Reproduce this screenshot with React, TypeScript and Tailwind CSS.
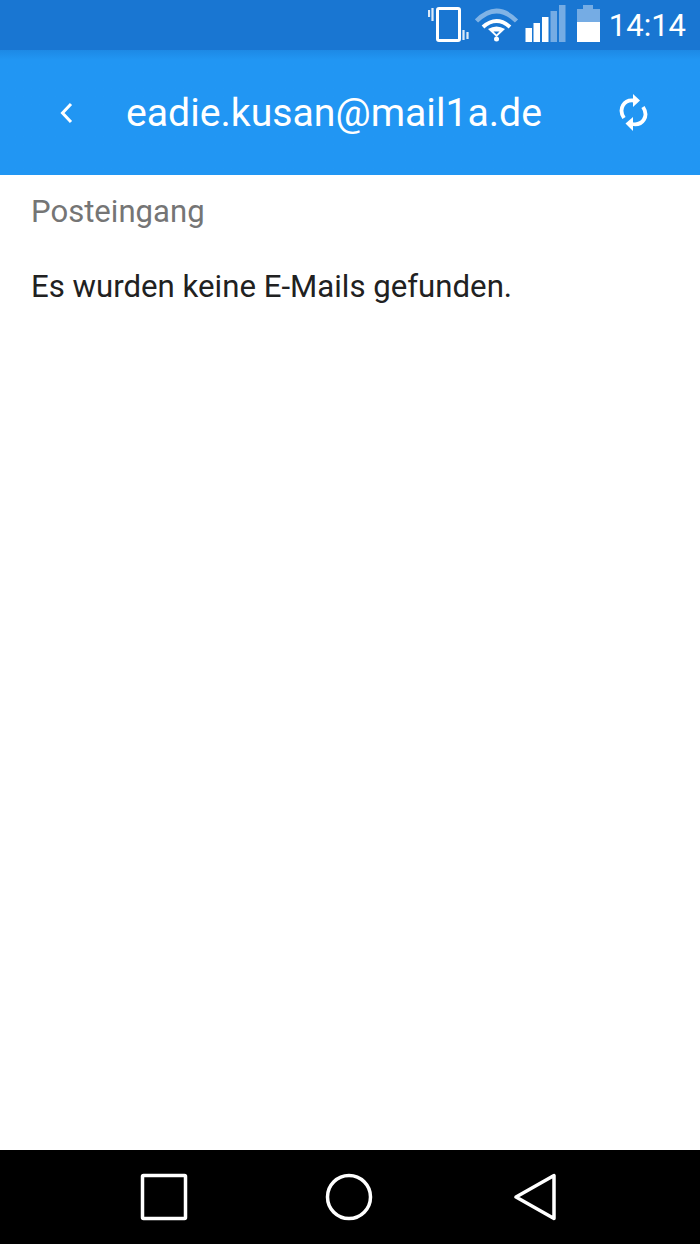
const FONT = { fontFamily: "Roboto, sans-serif" };

const VibrateIcon = () => (
  <svg width="42" height="50" viewBox="428 0 42 50" fill="none">
    <rect x="437.5" y="8.5" width="22" height="32" rx="1.5" stroke="white" strokeWidth="3" />
    <path d="M429 10v7M432.5 8v13M463.5 30v10M467.5 32v7" stroke="white" strokeOpacity="0.85" strokeWidth="2.2" />
  </svg>
);

const WifiIcon = () => (
  <svg width="44" height="50" viewBox="475 0 44 50" fill="none">
    <path d="M476.5 21 Q496.5 1 516.5 21" stroke="white" strokeOpacity="0.45" strokeWidth="4.5" />
    <path d="M483 27 Q496.5 15 510 27" stroke="white" strokeWidth="4" />
    <path d="M488 29 Q496.5 24 505 29 L496.5 37 Z" fill="white" />
    <path d="M493.5 31.5 L499.5 31.5 L496.5 34.5 Z" fill="#1976d2" />
    <circle cx="496.5" cy="39" r="2.5" fill="white" />
  </svg>
);

const SignalIcon = () => (
  <svg width="42" height="50" viewBox="525 0 42 50" fill="none">
    <rect x="525.5" y="28" width="6.5" height="14" fill="white" />
    <rect x="533.5" y="23" width="6.5" height="19" fill="white" />
    <rect x="542" y="17" width="6.5" height="25" fill="white" />
    <rect x="550.5" y="11" width="6.5" height="31" fill="white" fillOpacity="0.4" />
    <rect x="559" y="5" width="6.5" height="37" fill="white" fillOpacity="0.4" />
  </svg>
);

const BatteryIcon = () => (
  <svg width="23" height="50" viewBox="577 0 23 50" fill="none">
    <path d="M583 5h10v4h7v13h-23V9h6z" fill="white" fillOpacity="0.4" />
    <rect x="577" y="22" width="23" height="20" fill="white" />
  </svg>
);

const BackIcon = () => (
  <svg width="14" height="22" viewBox="0 0 14 22" fill="none">
    <path d="M12 2 L3.5 11 L12 20" stroke="white" strokeWidth="3" />
  </svg>
);

const SyncIcon = () => (
  <svg width="30" height="40" viewBox="620 94 30 40" fill="none">
    <path d="M625 119 C619 110 625 100 635 101.5" stroke="white" strokeWidth="3.8" />
    <path d="M644 108 C650 117 644 127 633 125" stroke="white" strokeWidth="3.8" />
    <path d="M634 95 L641 101.5 L634 108 Z" fill="white" />
    <path d="M634 118 L626.5 124.5 L634 132 Z" fill="white" />
  </svg>
);

const App = () => {
  return (
    <div className="flex flex-col w-[700px] h-[1244px] bg-white" style={FONT}>
      {/* Status bar */}
      <div className="flex items-center justify-end h-[50px] pr-[14px] bg-[#1976d2]">
        <VibrateIcon />
        <div className="ml-[5px]"><WifiIcon /></div>
        <div className="ml-[6px]"><SignalIcon /></div>
        <div className="ml-[10px]"><BatteryIcon /></div>
        <span className="ml-[9px] text-[31px] leading-none text-white">14:14</span>
      </div>

      {/* Toolbar */}
      <div className="flex items-center h-[125px] pl-[59px] pr-[51px] bg-linear-to-b from-[#1d89e5] to-[#2196f3] to-[8%]">
        <BackIcon />
        <h1 className="ml-[53px] mt-[2px] text-[39.2px] font-normal text-white">eadie.kusan@mail1a.de</h1>
        <div className="ml-auto flex">
          <SyncIcon />
        </div>
      </div>

      {/* Inbox */}
      <div className="flex-1 px-[31px]">
        <p className="mt-[17px] text-[31.1px] leading-[40px] text-[#757575]">Posteingang</p>
        <p className="mt-[35px] text-[31.2px] leading-[40px] text-[#212121]">
          Es wurden keine E-Mails gefunden.
        </p>
      </div>

      {/* Nav bar */}
      <div className="flex items-center justify-center gap-[137px] h-[94px] pr-[4px] bg-black">
        <svg width="48" height="48" viewBox="0 0 48 48" fill="none">
          <rect x="2.5" y="2.5" width="43" height="43" rx="1" stroke="white" strokeWidth="3.5" />
        </svg>
        <svg width="48" height="48" viewBox="0 0 48 48" fill="none">
          <circle cx="24" cy="24" r="21.5" stroke="white" strokeWidth="3.5" />
        </svg>
        <svg className="ml-[4px]" width="42" height="48" viewBox="0 0 42 48" fill="none">
          <path d="M40 2.5 V45.5 L2 24 Z" stroke="white" strokeWidth="3.5" strokeLinejoin="round" />
        </svg>
      </div>
    </div>
  );
};

export default App;
